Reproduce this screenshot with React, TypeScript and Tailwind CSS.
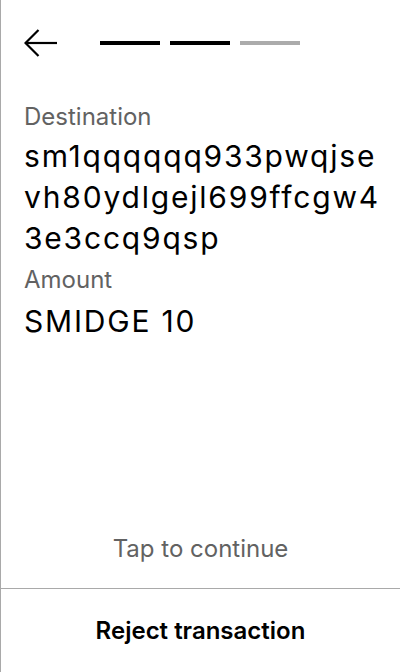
import React from 'react';

const steps = ['bg-black', 'bg-black', 'bg-[#ababab]'];

const App: React.FC = () => {
  return (
    <div
      className="w-[400px] h-[672px] flex flex-col bg-white border-l border-[#a9a9a9] text-black"
      style={{ fontFamily: 'Inter, "Noto Sans", sans-serif' }}
    >
      <header className="h-[86px] flex items-center pl-[23px]">
        <button className="w-[34px] h-[28px] flex items-center">
          <svg width="34" height="28" viewBox="0 0 34 28" fill="none" stroke="black" strokeWidth="2.2">
            <path d="M1.5 14 H33" />
            <path d="M14.5 1 L1.5 14 L14.5 27" />
          </svg>
        </button>
        <div className="ml-[42px] flex gap-[10px] mt-[-1px]">
          {steps.map((c, i) => (
            <div key={i} className={`w-[60px] h-[4px] ${c}`} />
          ))}
        </div>
      </header>

      <main className="pl-[23px] pr-[18px]">
        <div className="mt-[16px] text-[24px] leading-[30px] text-[#626262]">Destination</div>
        <div className="mt-[4px] text-[30px] leading-[41px] tracking-[1.8px] break-all">
          sm1qqqqqq933pwqjsevh80ydlgejl699ffcgw43e3ccq9qsp
        </div>
        <div className="mt-[6px] text-[24px] leading-[30px] text-[#626262]">Amount</div>
        <div className="mt-[9px] text-[30px] leading-[34.5px] tracking-[1.8px]">SMIDGE 10</div>
      </main>

      <div className="flex-1" />

      <div className="text-center text-[24px] leading-[30px] text-[#626262] mb-[24px]">Tap to continue</div>

      <button className="h-[84px] border-t border-[#a9a9a9] text-[24px] font-semibold text-center">
        Reject transaction
      </button>
    </div>
  );
};

export default App;
